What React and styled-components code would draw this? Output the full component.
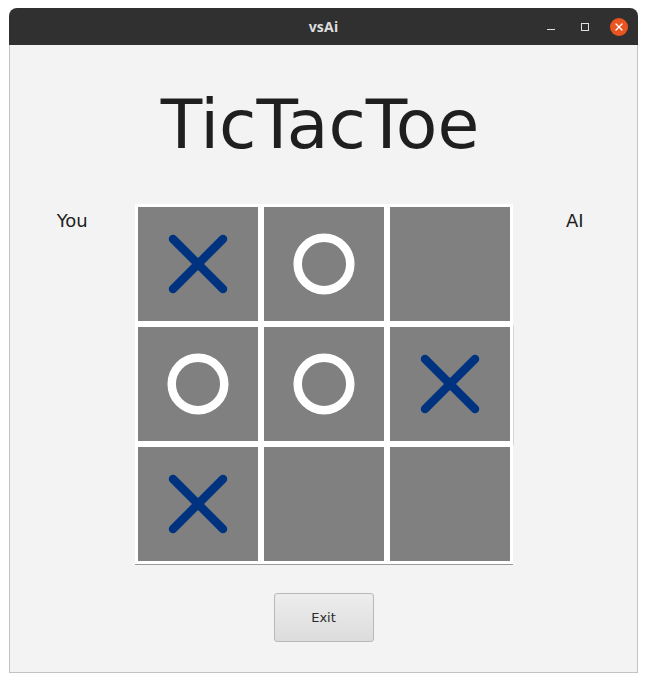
import React from 'react';
import styled, { createGlobalStyle } from 'styled-components';

const GlobalStyle = createGlobalStyle`
  html, body {
    margin: 0;
    padding: 0;
    background: #ffffff;
  }
  body {
    font-family: "DejaVu Sans", Verdana, sans-serif;
  }
`;

const Page = styled.div`
  padding: 8px 9px 9px 9px;
  width: 629px;
`;

const Window = styled.div`
  display: flex;
  flex-direction: column;
  height: 665px;
  border-radius: 8px 8px 0 0;
  overflow: hidden;
`;

const TitleBar = styled.div`
  display: grid;
  grid-template-columns: 1fr auto 1fr;
  align-items: center;
  height: 37px;
  background: #303030;
  color: #dedede;
  flex-shrink: 0;
`;

const TitleText = styled.div`
  grid-column: 2;
  font-family: "Noto Sans", "DejaVu Sans", sans-serif;
  font-weight: 700;
  font-size: 14px;
  letter-spacing: 0.2px;
`;

const Controls = styled.div`
  grid-column: 3;
  justify-self: end;
  display: flex;
  align-items: center;
  padding-right: 2px;
`;

const ControlSlot = styled.div`
  width: 34px;
  height: 37px;
  display: flex;
  align-items: center;
  justify-content: center;
`;

const Minimize = styled.div`
  width: 8px;
  height: 1px;
  margin-top: 5px;
  background: #e0e0e0;
`;

const Maximize = styled.div`
  width: 6px;
  height: 6px;
  border: 1px solid #e0e0e0;
`;

const Close = styled.div`
  width: 18px;
  height: 18px;
  border-radius: 50%;
  background: #e95420;
  display: flex;
  align-items: center;
  justify-content: center;
`;

const Content = styled.div`
  flex: 1;
  display: flex;
  flex-direction: column;
  align-items: center;
  background: #f3f3f3;
  border: 1px solid #c2c2c2;
  border-top: none;
`;

const Heading = styled.h1`
  margin: 40px 0 0 -7px;
  font-family: "DejaVu Sans", Verdana, sans-serif;
  font-weight: 400;
  font-size: 68px;
  line-height: 79px;
  color: #1f1f1f;
`;

const PlayRow = styled.div`
  display: grid;
  grid-template-columns: 1fr 378px 1fr;
  width: 100%;
  margin-top: 40px;
`;

const Player = styled.div`
  text-align: center;
  padding-top: 6px;
  font-size: 18px;
  line-height: 22px;
  color: #1f1f1f;
`;

const Board = styled.div`
  display: grid;
  grid-template-columns: repeat(3, 126px);
  grid-template-rows: repeat(3, 120px);
`;

const Cell = styled.button`
  box-sizing: border-box;
  padding: 0;
  margin: 0;
  display: flex;
  align-items: center;
  justify-content: center;
  background: #808080;
  border: 3px solid #ffffff;
  box-shadow: ${p => (p.$edge ? '1px 1px 0 #d6d6d6' : '0 1px 0 #9a9a9a')};
  cursor: pointer;
`;

const Footer = styled.div`
  margin-top: 29px;
`;

const ExitButton = styled.button`
  width: 100px;
  height: 49px;
  border: 1px solid #b8b8b8;
  border-radius: 3px;
  background: linear-gradient(#ededed, #dcdcdc);
  font-family: "DejaVu Sans", Verdana, sans-serif;
  font-size: 13px;
  color: #2b2b2b;
  cursor: pointer;
`;

const Cross = () => (
  <svg width="62" height="62" viewBox="0 0 62 62">
    <g stroke="#00337f" strokeWidth="8.5" strokeLinecap="round">
      <line x1="6" y1="6" x2="56" y2="56" />
      <line x1="56" y1="6" x2="6" y2="56" />
    </g>
  </svg>
);

const Nought = () => (
  <svg width="62" height="62" viewBox="0 0 62 62">
    <circle cx="31" cy="31" r="26.3" fill="none" stroke="#ffffff" strokeWidth="8.5" />
  </svg>
);

const board = ['X', 'O', '', 'O', 'O', 'X', 'X', '', ''];

export default function App() {
  return (
    <>
      <GlobalStyle />
      <Page>
        <Window>
          <TitleBar>
            <TitleText>vsAi</TitleText>
            <Controls>
              <ControlSlot><Minimize /></ControlSlot>
              <ControlSlot><Maximize /></ControlSlot>
              <ControlSlot>
                <Close>
                  <svg width="8" height="8" viewBox="0 0 8 8">
                    <g stroke="#ffffff" strokeWidth="1.4" strokeLinecap="round">
                      <line x1="1" y1="1" x2="7" y2="7" />
                      <line x1="7" y1="1" x2="1" y2="7" />
                    </g>
                  </svg>
                </Close>
              </ControlSlot>
            </Controls>
          </TitleBar>
          <Content>
            <Heading>TicTacToe</Heading>
            <PlayRow>
              <Player>You</Player>
              <Board>
                {board.map((mark, i) => (
                  <Cell key={i} $edge={i === 5}>
                    {mark === 'X' && <Cross />}
                    {mark === 'O' && <Nought />}
                  </Cell>
                ))}
              </Board>
              <Player>AI</Player>
            </PlayRow>
            <Footer>
              <ExitButton>Exit</ExitButton>
            </Footer>
          </Content>
        </Window>
      </Page>
    </>
  );
}
